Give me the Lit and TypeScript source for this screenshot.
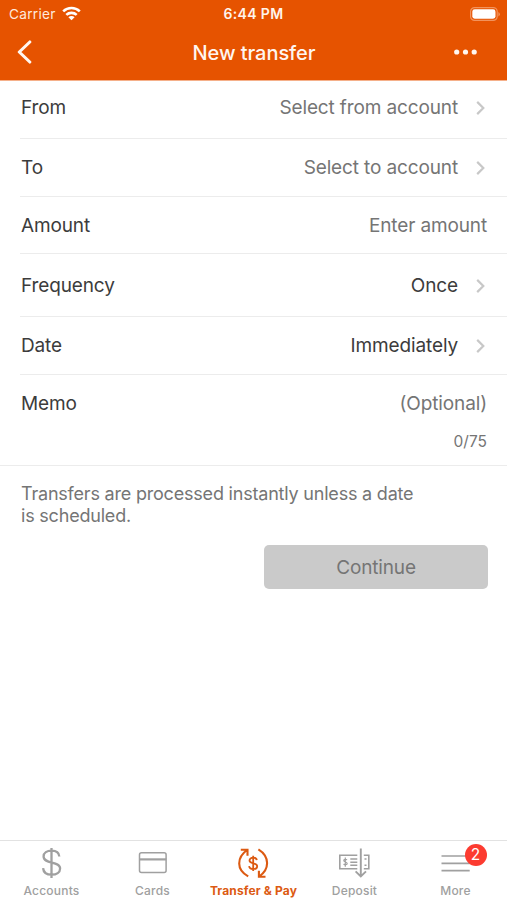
import { LitElement, html, css, svg, nothing } from "lit";
import { customElement, property } from "lit/decorators.js";
import { classMap } from "lit/directives/class-map.js";

@customElement("status-bar")
class StatusBar extends LitElement {
  static styles = css`
    :host {
      display: grid;
      grid-template-columns: 1fr auto 1fr;
      align-items: center;
      height: 27px;
      padding: 0 7px 0 9px;
      color: #ffe9dc;
      font-size: 13.7px;
    }
    .carrier { display: flex; align-items: center; gap: 6px; letter-spacing: 0.25px; }
    .time { margin-right: 2px; font-weight: 600; font-size: 14px; letter-spacing: 0.35px; color: #fff4ec; }
    .battery { justify-self: end; }
    svg { display: block; }
  `;
  render() {
    return html`
      <div class="carrier">
        <span>Carrier</span>
        <svg width="19" height="15" viewBox="0 0 19 15" fill="none" stroke="#fff" stroke-width="2.6">
          <path d="M1.2 5.4a12 12 0 0 1 16.6 0" />
          <path d="M4.3 8.9a7.6 7.6 0 0 1 10.4 0" />
          <path d="M9.5 14.2 6.4 11.2a4.4 4.4 0 0 1 6.2 0z" fill="#fff" stroke="none" />
        </svg>
      </div>
      <div class="time">6:44 PM</div>
      <svg class="battery" width="30" height="14" viewBox="0 0 30 14">
        <rect x="0.6" y="0.6" width="26.6" height="12.8" rx="4" fill="none" stroke="#f2935c" stroke-width="1.2" />
        <rect x="2.3" y="2.3" width="23.2" height="9.4" rx="2.4" fill="#fff" />
        <path d="M28.4 5v4.4q1.5-.8 1.5-2.2T28.4 5z" fill="#f2935c" />
      </svg>
    `;
  }
}

@customElement("nav-header")
class NavHeader extends LitElement {
  static styles = css`
    :host {
      display: grid;
      grid-template-columns: 1fr auto 1fr;
      align-items: center;
      height: 52px;
      padding: 0 30px 2px 17px;
      box-sizing: border-box;
      color: #fff6f0;
    }
    h1 { margin: 2px 0 0 14px; font-size: 20px; font-weight: 500; letter-spacing: -0.05px; line-height: 24px; }
    .menu { justify-self: end; }
    svg { display: block; }
  `;
  render() {
    return html`
      <svg width="15" height="24" viewBox="0 0 15 24" fill="none" stroke="#fff6f0" stroke-width="3.1" stroke-linecap="round" stroke-linejoin="round">
        <path d="M12.8 2 2.3 12 12.8 22" />
      </svg>
      <h1>New transfer</h1>
      <svg class="menu" width="23" height="6" viewBox="0 0 23 6" fill="#fff6f0">
        <circle cx="2.7" cy="3" r="2.6" /><circle cx="11.5" cy="3" r="2.6" /><circle cx="20.2" cy="3" r="2.6" />
      </svg>
    `;
  }
}

@customElement("form-row")
class FormRow extends LitElement {
  @property() label = "";
  @property() value = "";
  @property({ type: Boolean }) filled = false;
  @property({ type: Boolean }) link = false;

  static styles = css`
    :host {
      display: flex;
      align-items: center;
      margin-left: 20px;
      padding: 0 20px 0 1px;
      box-sizing: border-box;
      border-bottom: 1px solid #ececec;
      font-size: 19px;
      line-height: 24px;
      letter-spacing: -0.13px;
    }
    .label { flex: 1; color: #3c3c3c; }
    .value { color: #757575; }
    .filled { color: #3c3c3c; }
    svg { display: block; margin: 0 2px 0 18px; }
  `;
  render() {
    return html`
      <span class="label">${this.label}</span>
      <span class=${classMap({ value: true, filled: this.filled })}>${this.value}</span>
      ${this.link
        ? html`<svg width="9" height="14" viewBox="0 0 9 14" fill="none" stroke="#c8c8c8" stroke-width="2.2">
            <path d="M1.2 .9 7.3 7 1.2 13.1" />
          </svg>`
        : nothing}
    `;
  }
}

const icons = {
  accounts: svg`
    <path d="M18.2 0v30M26 8.5C25.7 4.8 22.6 2.7 18.3 2.7c-4.6 0-8 2.2-8 5.8 0 8.2 16.5 4 16.5 12 0 3.9-3.5 6.2-8.4 6.2-5.1 0-8.3-2.6-8.6-6.6" stroke-width="2.3" />`,
  cards: svg`
    <rect x="5.2" y="4.7" width="26.6" height="19.8" rx="2" stroke-width="1.5" />
    <path d="M5 11.4h27" stroke-width="2.2" />`,
  transfer: svg`
    <path d="M12.9 28.4C7 25 3.9 20.8 3.9 15.4c0-5.400 2.900-9.900 7.900-13.400M5.500 1.700h6.700v6M23.100 1.400c5.400 3.400 8.700 8.100 8.700 13.700 0 5.300-2.700 9.900-7.900 13.400M30.200 28.800h-6.600v-6" stroke-width="2.1" />
    <path d="M17.9 7.7v15.2M21.5 12.1c-.3-1.600-1.700-2.400-3.600-2.400-2.100 0-3.700 1-3.700 2.700 0 3.800 7.700 1.900 7.700 5.800 0 1.700-1.700 2.900-4 2.900-2.200 0-3.900-1-4.100-2.900" stroke-width="1.8" />`,
  deposit: svg`
    <path d="M21 7.3H3.5v13.5H21M27.500 7.300h5v13.500h-5" stroke-width="1.6" />
    <path d="M24.5 .5v27.5M19.3 23.3l5.2 5.2 5.2-5.2" stroke-width="1.9" />
    <path d="M14 11h7M14 14.2h7M14 17.3h7M28.2 11h2M28.2 17.3h2" stroke-width="1.5" />
    <path d="M9 9.5v9.2M10.7 12c-.8-1-3.2-.9-3.2.5 0 1.7 3.4 1.2 3.4 2.9 0 1.5-2.6 1.7-3.600.6" stroke-width="1.2" />`,
  more: svg`<path d="M4.2 8h28.2M4.2 15.4h28.2M4.2 22.7h28.2" stroke-width="1.7" />`,
};

@customElement("tab-item")
class TabItem extends LitElement {
  @property() label = "";
  @property() icon: keyof typeof icons = "more";
  @property() badge = "";
  @property({ type: Boolean }) active = false;

  static styles = css`
    :host { display: block; }
    .tab { display: flex; flex-direction: column; align-items: center; padding-top: 7px; color: #a0a0a0; }
    .active { color: #dc5a12; }
    .icon { position: relative; width: 36px; height: 32px; }
    svg { display: block; }
    .label { margin-top: 3px; font-size: 12px; line-height: 16px; font-weight: 500; letter-spacing: 0.2px; white-space: nowrap; }
    .active .label { font-weight: 700; letter-spacing: 0.15px; }
    .badge {
      position: absolute;
      left: 27px;
      top: -4px;
      width: 22px;
      height: 22px;
      border-radius: 50%;
      background: #fc3b30;
      color: #fff;
      font-size: 15.5px;
      line-height: 22px;
      text-align: center;
    }
  `;
  render() {
    return html`<div class=${classMap({ tab: true, active: this.active })}>
      <div class="icon">
        <svg width="36" height="32" viewBox="0.7 0 36 32" fill="none" stroke="currentColor">${icons[this.icon]}</svg>
        ${this.badge ? html`<span class="badge">${this.badge}</span>` : nothing}
      </div>
      <span class="label">${this.label}</span>
    </div>`;
  }
}

@customElement("app-root")
class AppRoot extends LitElement {
  static styles = css`
    :host {
      display: flex;
      flex-direction: column;
      height: 900px;
      background: #fff;
      font-family: Inter, "Liberation Sans", sans-serif;
      overflow: hidden;
    }
    .top { height: 80px; background: #e65300; border-bottom: 1px solid #f5b08a; }
    .from { height: 58px; padding-bottom: 3px; }
    .to { height: 58px; }
    .amount { height: 57px; padding-top: 2px; }
    .frequency { height: 63px; padding-top: 1px; }
    .date { height: 58px; padding-top: 1px; }
    .memo { height: 57px; border-bottom: none; padding-top: 1px; }
    .count {
      height: 34px;
      padding-right: 20px;
      box-sizing: border-box;
      border-bottom: 1px solid #ececec;
      color: #757575;
      font-size: 15.5px;
      line-height: 20px;
      text-align: right;
    }
    .note {
      width: 410px;
      margin: 17px 0 0 21px;
      color: #757575;
      font-size: 18px;
      line-height: 21.6px;
      letter-spacing: -0.2px;
    }
    .continue {
      align-self: flex-end;
      width: 224px;
      height: 44px;
      margin: 19px 19px 0 0;
      padding: 0;
      border: none;
      border-radius: 5px;
      background: #cacaca;
      color: #757575;
      font: inherit;
      font-size: 19px;
      letter-spacing: -0.15px;
    }
    .tabs {
      display: grid;
      grid-template-columns: repeat(5, 101px);
      justify-content: center;
      height: 60px;
      margin-top: auto;
      box-sizing: border-box;
      border-top: 1px solid #e2e2e2;
    }
  `;
  render() {
    return html`
      <header class="top"><status-bar></status-bar><nav-header></nav-header></header>
      <form-row class="from" label="From" value="Select from account" link></form-row>
      <form-row class="to" label="To" value="Select to account" link></form-row>
      <form-row class="amount" label="Amount" value="Enter amount"></form-row>
      <form-row class="frequency" label="Frequency" value="Once" filled link></form-row>
      <form-row class="date" label="Date" value="Immediately" filled link></form-row>
      <form-row class="memo" label="Memo" value="(Optional)"></form-row>
      <div class="count">0/75</div>
      <div class="note">Transfers are processed instantly unless a date<br />is scheduled.</div>
      <button class="continue">Continue</button>
      <nav class="tabs">
        <tab-item icon="accounts" label="Accounts"></tab-item>
        <tab-item icon="cards" label="Cards"></tab-item>
        <tab-item icon="transfer" label="Transfer &amp; Pay" active></tab-item>
        <tab-item icon="deposit" label="Deposit"></tab-item>
        <tab-item icon="more" label="More" badge="2"></tab-item>
      </nav>
    `;
  }
}
